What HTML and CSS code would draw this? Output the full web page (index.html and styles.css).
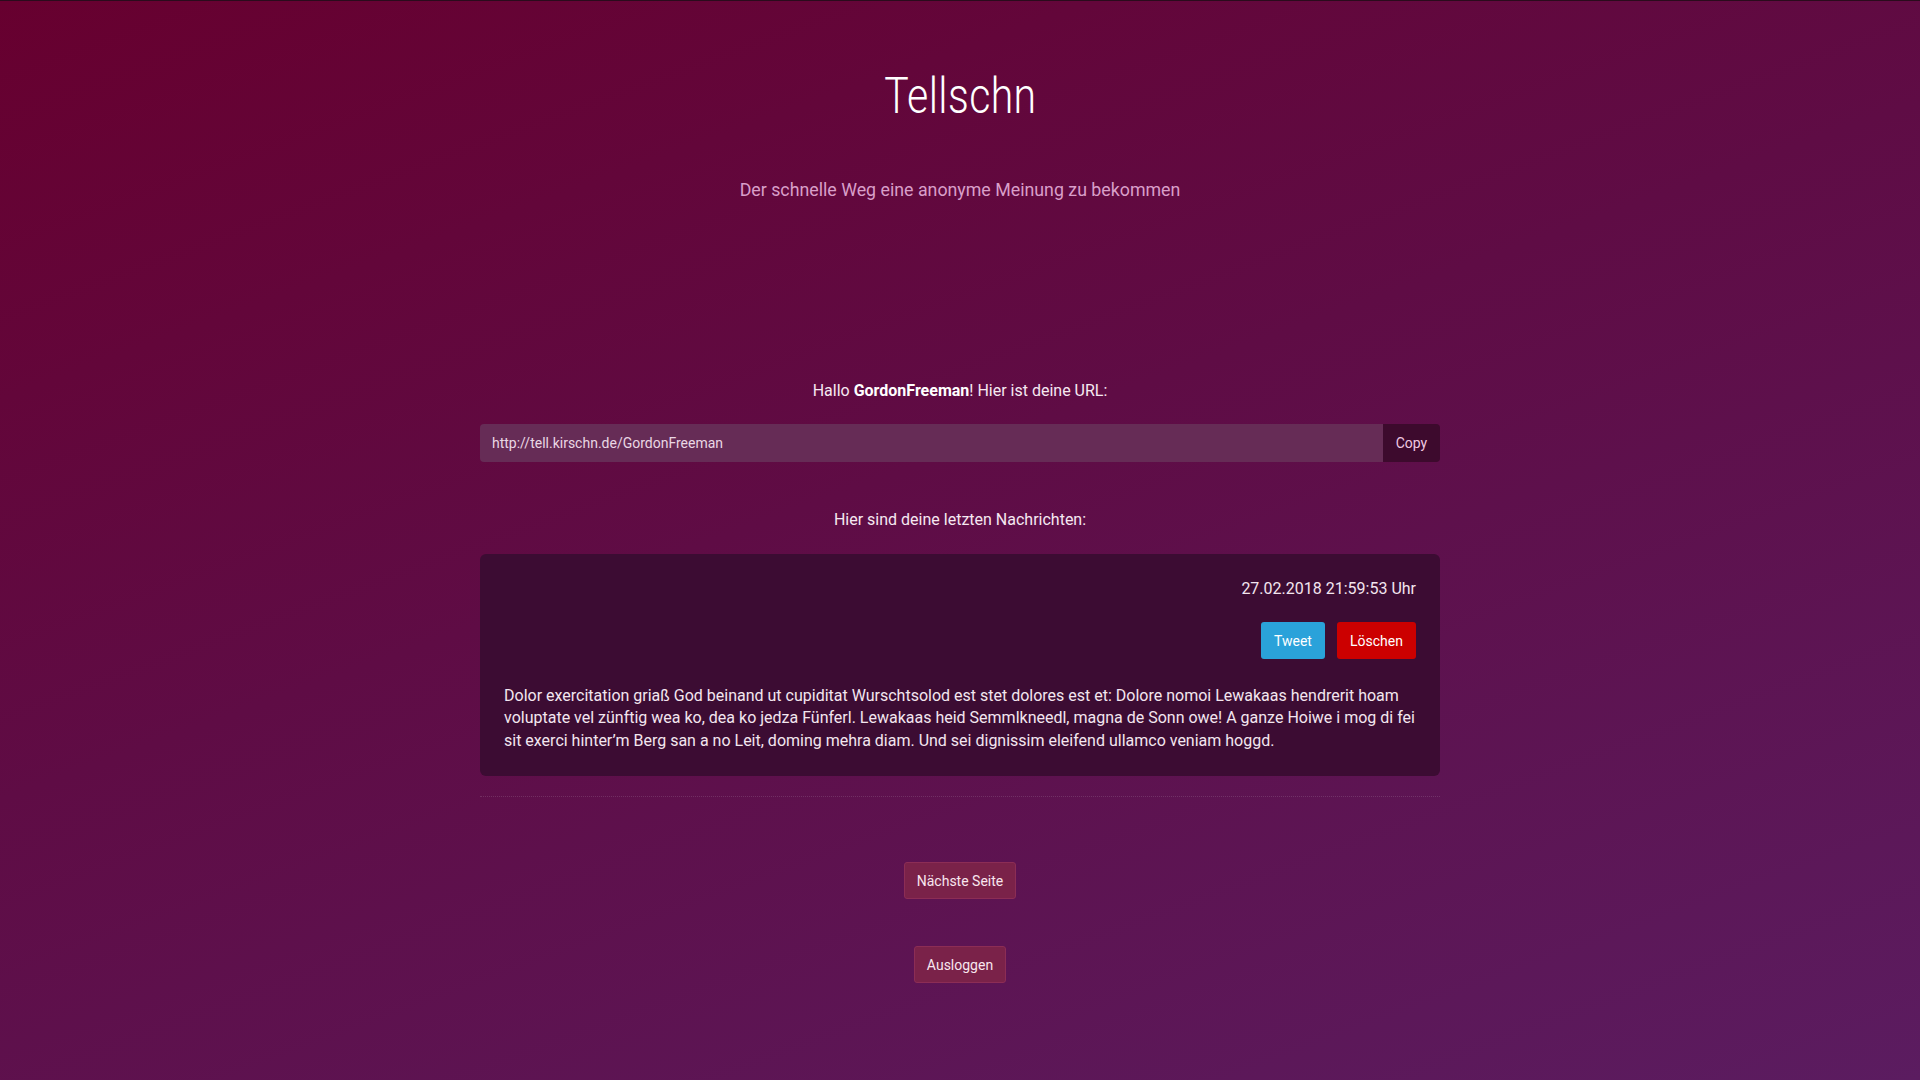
FILE: index.html
```html
<!DOCTYPE html>
<html lang="de">
<head>
<meta charset="utf-8">
<title>Tellschn</title>
<link rel="stylesheet" href="styles.css">
</head>
<body>
<div class="page">
  <header class="hero">
    <h1 class="title">Tellschn</h1>
    <p class="subtitle">Der schnelle Weg eine anonyme Meinung zu bekommen</p>
  </header>
  <main class="content">
    <p class="hello">Hallo <strong>GordonFreeman</strong>! Hier ist deine URL:</p>
    <div class="url-group">
      <input class="url-input" type="text" value="http://tell.kirschn.de/GordonFreeman" readonly>
      <button class="btn-copy">Copy</button>
    </div>
    <p class="messages-title">Hier sind deine letzten Nachrichten:</p>
    <article class="message">
      <div class="message-date">27.02.2018 21:59:53 Uhr</div>
      <div class="message-actions">
        <button class="btn btn-tweet">Tweet</button>
        <button class="btn btn-delete">Löschen</button>
      </div>
      <p class="message-text">Dolor exercitation griaß God beinand ut cupiditat Wurschtsolod est stet dolores est et: Dolore nomoi Lewakaas hendrerit hoam voluptate vel zünftig wea ko, dea ko jedza Fünferl. Lewakaas heid Semmlkneedl, magna de Sonn owe! A ganze Hoiwe i mog di fei sit exerci hinter’m Berg san a no Leit, doming mehra diam. Und sei dignissim eleifend ullamco veniam hoggd.</p>
    </article>
    <hr class="divider">
    <div class="pager">
      <button class="btn btn-soft">Nächste Seite</button>
    </div>
    <div class="logout">
      <button class="btn btn-soft">Ausloggen</button>
    </div>
  </main>
</div>
</body>
</html>
```
FILE: styles.css
```css
html, body {
  margin: 0;
  padding: 0;
}
body {
  min-height: 100vh;
  box-sizing: border-box;
  border-top: 1px solid #2a0b1c;
  background: linear-gradient(160deg, #67002f 0%, #5f0c45 45%, #5b1c60 100%);
  background-attachment: fixed;
  font-family: Roboto, "Liberation Sans", sans-serif;
  color: #f4e6f0;
}
.page {
  display: flex;
  flex-direction: column;
  align-items: center;
}
.hero {
  text-align: center;
  padding-top: 65px;
}
.title {
  margin: 0;
  font-family: Roboto, sans-serif;
  font-weight: 300;
  font-size: 50px;
  line-height: 60px;
  color: #ffffff;
  transform: scaleX(0.82);
  letter-spacing: 0.5px;
}
.subtitle {
  margin: 52px 0 0;
  font-size: 17.8px;
  line-height: 24px;
  color: #d99fc9;
  letter-spacing: 0;
}
.content {
  width: 960px;
  display: flex;
  flex-direction: column;
  padding-top: 177px;
}
.hello, .messages-title {
  margin: 0;
  text-align: center;
  font-size: 16px;
  line-height: 24px;
  color: #f6e8f1;
}
.hello strong {
  font-weight: 700;
  color: #ffffff;
}
.url-group {
  display: flex;
  margin-top: 21px;
  height: 38px;
}
.url-input {
  flex: 1;
  min-width: 0;
  box-sizing: border-box;
  border: none;
  outline: none;
  border-radius: 4px 0 0 4px;
  background: #662c56;
  color: #ead7e4;
  font-family: Roboto, sans-serif;
  font-size: 14px;
  padding: 0 12px;
}
.btn-copy {
  width: 57px;
  border: none;
  border-radius: 0 4px 4px 0;
  background: #3d0a2d;
  color: #f0c9e2;
  font-family: Roboto, sans-serif;
  font-size: 14px;
  padding: 0;
}
.messages-title {
  margin-top: 46px;
}
.message {
  margin-top: 22px;
  background: #3c0c33;
  border-radius: 6px;
  padding: 23px 24px 24px;
  display: flex;
  flex-direction: column;
}
.message-date {
  text-align: right;
  font-size: 16px;
  line-height: 24px;
  color: #f3e5ef;
}
.message-actions {
  display: flex;
  justify-content: flex-end;
  gap: 12px;
  margin-top: 21px;
}
.btn {
  height: 37px;
  border-radius: 3px;
  font-family: Roboto, sans-serif;
  font-size: 14px;
  padding: 0 12px;
  color: #ffffff;
  border: none;
}
.btn-tweet {
  background: #2aa2da;
  width: 64px;
  padding: 0;
}
.btn-delete {
  background: #cc0000;
  width: 79px;
  padding: 0;
}
.message-text {
  margin: 26px 0 0;
  font-size: 16px;
  line-height: 22.4px;
  color: #f3e6ef;
}
.divider {
  margin: 20px 0 0;
  border: none;
  border-top: 1px dotted rgba(255, 255, 255, 0.13);
  height: 0;
}
.pager, .logout {
  display: flex;
  justify-content: center;
}
.pager {
  margin-top: 65px;
}
.logout {
  margin-top: 47px;
}
.btn-soft {
  background: #7a2249;
  border: 1px solid #8c2d55;
  color: #f8e6ee;
  padding: 0 12px;
}
```
